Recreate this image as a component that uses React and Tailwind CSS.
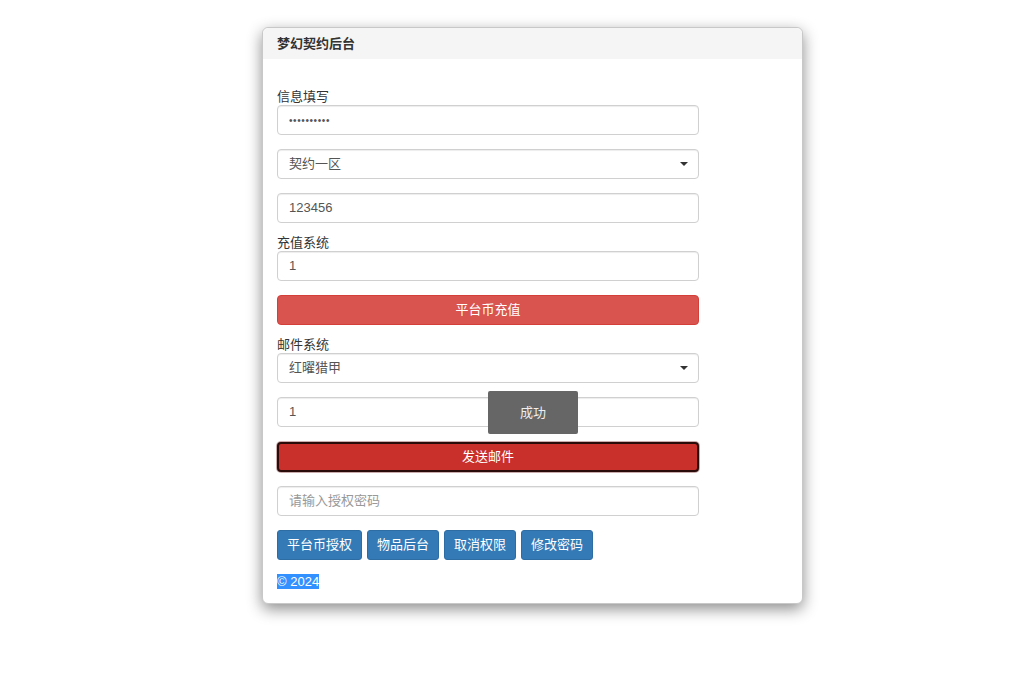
import React from "react";

const font = { fontFamily: '"Liberation Sans", "Noto Sans CJK SC", sans-serif' };

function Field({ children, className = "" }) {
  return (
    <div
      className={
        "w-[422px] h-[30px] rounded-[4px] border border-[#d0d0d0] bg-white shadow-[inset_0_1px_1px_rgba(0,0,0,0.075)] flex items-center pl-[11px] pr-[10px] text-[13px] text-[#555] " +
        className
      }
    >
      {children}
    </div>
  );
}

function Select({ value }) {
  return (
    <Field className="justify-between">
      <span>{value}</span>
      <span className="w-0 h-0 border-l-[4px] border-r-[4px] border-t-[4px] border-l-transparent border-r-transparent border-t-[#333]" />
    </Field>
  );
}

function Label({ children, className = "" }) {
  return <div className={"text-[13px] leading-[16px] text-[#333] " + className}>{children}</div>;
}

export default function App() {
  return (
    <div className="min-h-screen bg-white" style={font}>
      <div className="pt-[27px] pl-[262px]">
        <div className="relative w-[541px] rounded-[6px] border border-[#c8c8c8] bg-white shadow-[0_5px_15px_rgba(0,0,0,0.45)]">
          <div className="h-[31px] bg-[#f5f5f5] rounded-t-[6px] px-[14px] flex items-center text-[13px] font-bold text-[#333]">
            梦幻契约后台
          </div>
          <div className="px-[14px] pt-[30px] pb-[14px]">
            <Label>信息填写</Label>
            <Field>
              <span className="text-[10px] tracking-[0.6px] text-[#555]">••••••••••</span>
            </Field>
            <div className="mt-[14px]">
              <Select value="契约一区" />
            </div>
            <div className="mt-[14px]">
              <Field>123456</Field>
            </div>
            <Label className="mt-[12px]">充值系统</Label>
            <Field>1</Field>
            <button className="mt-[14px] w-[422px] h-[30px] rounded-[4px] bg-[#d9534f] border border-[#d43f3a] text-white text-[13px] flex items-center justify-center">
              平台币充值
            </button>
            <Label className="mt-[12px]">邮件系统</Label>
            <Select value="红曜猎甲" />
            <div className="mt-[14px]">
              <Field>1</Field>
            </div>
            <button className="mt-[15px] w-[422px] h-[30px] rounded-[4px] bg-[#c9302c] border-2 border-[#2a0c0b] shadow-[0_0_0_1px_rgba(150,90,90,0.5)] text-white text-[13px] flex items-center justify-center">
              发送邮件
            </button>
            <div className="mt-[14px]">
              <Field>
                <span className="text-[#999]">请输入授权密码</span>
              </Field>
            </div>
            <div className="mt-[14px] flex gap-[5px]">
              {["平台币授权", "物品后台", "取消权限", "修改密码"].map((t) => (
                <button
                  key={t}
                  className="h-[30px] px-[9px] rounded-[3px] bg-[#337ab7] border border-[#2e6da4] text-white text-[13px] flex items-center"
                >
                  {t}
                </button>
              ))}
            </div>
            <div className="mt-[14px] h-[15px] flex">
              <span className="bg-[#3390ff] text-white text-[13px] leading-[15px]">© 2024</span>
            </div>
          </div>
          <div className="absolute left-[225px] top-[363px] w-[90px] h-[43px] rounded-[2px] bg-[#666666] text-[#eeeeee] text-[13px] flex items-center justify-center">
            成功
          </div>
        </div>
      </div>
    </div>
  );
}
